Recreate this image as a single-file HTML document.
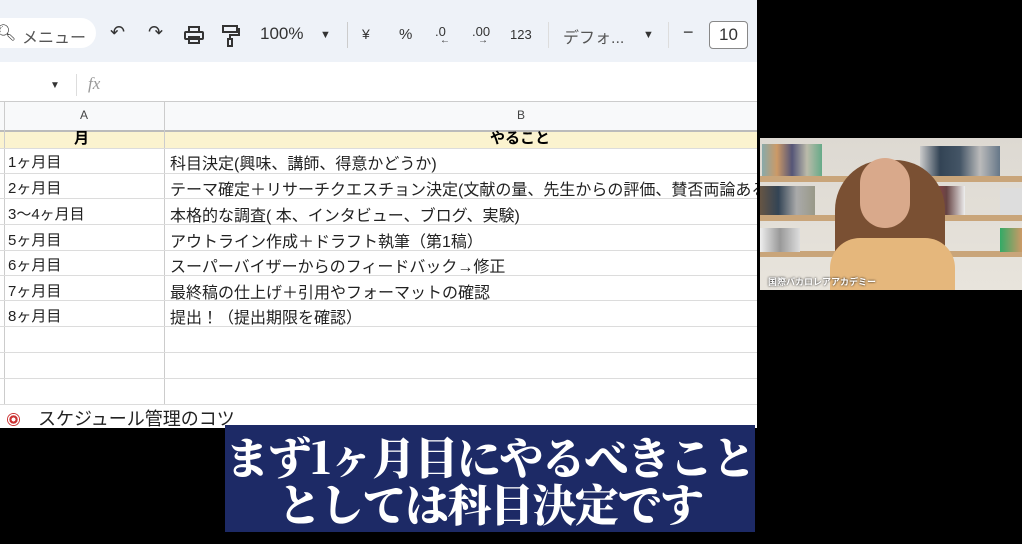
<!DOCTYPE html>
<html><head><meta charset="utf-8"><style>
*{margin:0;padding:0;box-sizing:border-box}
body{width:1022px;height:544px;background:#000;position:relative;overflow:hidden;font-family:"Liberation Sans","Noto Sans CJK JP",sans-serif}
.abs{position:absolute}
#sheet{left:0;top:0;width:757px;height:428px;background:#fff;overflow:hidden}
#tb{left:0;top:0;width:757px;height:62px;background:#eef2f8}
.t{position:absolute;top:24px;font-size:16px;color:#333}
.hl{position:absolute;left:0;width:757px;height:1px;background:#dcdcdc}
.cell{position:absolute;font-size:15px;color:#222;white-space:nowrap}
.cb{font-size:16px;top:-1px}
#cap{left:225px;top:425px;width:530px;height:107px;background:#1d2a66;color:#fff;font-family:"Noto Serif CJK SC","Liberation Serif",serif;font-weight:900;font-size:44px;line-height:47px;text-align:center;padding-top:7px;letter-spacing:-1.5px;white-space:nowrap}
#vid{left:760px;top:138px;width:262px;height:152px;background:linear-gradient(#ddd9d2,#e8e4dc);overflow:hidden}
.shelf{position:absolute;left:0;width:262px;height:6px;background:#c9a57a}
</style></head><body>
<div id="sheet" class="abs">
 <div id="tb" class="abs">
  <div class="abs" style="left:0;top:18px;width:96px;height:30px;background:#fff;border-radius:0 15px 15px 0"></div>
  <div class="t" style="left:-4px;top:23px">🔍︎</div>
  <div class="t" style="left:22px;color:#555">メニュー</div>
  <div class="t" style="left:110px;font-size:18px;top:22px">↶</div>
  <div class="t" style="left:148px;font-size:18px;top:22px">↷</div>
  <svg class="abs" style="left:184px;top:26px" width="20" height="18" viewBox="0 0 20 18" fill="none" stroke="#333" stroke-width="2"><rect x="5" y="1" width="10" height="5"/><rect x="1" y="6" width="18" height="7" rx="1"/><rect x="5" y="11" width="10" height="6"/></svg>
  <svg class="abs" style="left:222px;top:25px" width="18" height="22" viewBox="0 0 18 22" fill="none" stroke="#333" stroke-width="2"><rect x="1" y="1" width="14" height="6"/><path d="M15 4h2v6H8v4"/><rect x="6" y="14" width="4" height="7"/></svg>
  <div class="t" style="left:260px;font-size:17px">100%</div>
  <div class="t" style="left:320px;font-size:11px;top:29px">▼</div>
  <div class="abs" style="left:347px;top:22px;width:1px;height:26px;background:#ccc"></div>
  <div class="t" style="left:362px;font-size:14px;top:26px">¥</div>
  <div class="t" style="left:399px;font-size:15px;top:26px">%</div>
  <div class="t" style="left:435px;font-size:13px;top:24px">.0<br><span style="position:relative;top:-8px;left:5px;font-size:10px">←</span></div>
  <div class="t" style="left:472px;font-size:13px;top:24px">.00<br><span style="position:relative;top:-8px;left:6px;font-size:10px">→</span></div>
  <div class="t" style="left:510px;font-size:13px;top:27px">123</div>
  <div class="abs" style="left:548px;top:22px;width:1px;height:26px;background:#ddd"></div>
  <div class="t" style="left:563px;color:#555">デフォ...</div>
  <div class="t" style="left:643px;font-size:11px;top:29px">▼</div>
  <div class="abs" style="left:668px;top:22px;width:1px;height:26px;background:#ddd"></div>
  <div class="t" style="left:683px;font-size:18px;top:22px">−</div>
  <div class="abs" style="left:709px;top:21px;width:39px;height:28px;border:1px solid #888;border-radius:4px;background:#fff;font-size:17px;text-align:center;line-height:26px;color:#333">10</div>
 </div>
 <div class="abs" style="left:50px;top:80px;font-size:10px;color:#333">▼</div>
 <div class="abs" style="left:76px;top:74px;width:1px;height:22px;background:#ddd"></div>
 <div class="abs" style="left:88px;top:74px;font-size:17px;color:#999;font-style:italic;font-family:'Liberation Serif',serif">fx</div>
 <div class="abs" style="left:0;top:101px;width:757px;height:29px;background:#f8f9fa;border-top:1px solid #ccc"></div>
 <div class="abs" style="left:80px;top:108px;font-size:12px;color:#444">A</div>
 <div class="abs" style="left:517px;top:108px;font-size:12px;color:#444">B</div>
 <div class="abs" style="left:0;top:130px;width:757px;height:18px;background:#fbf3cf;border-top:2px solid #bbb"></div>
 <div class="abs" style="left:74px;top:127px;font-size:15px;font-weight:bold">月</div>
 <div class="abs" style="left:490px;top:127px;font-size:15px;font-weight:bold">やること</div>
 <div class="abs" style="left:164px;top:101px;width:1px;height:310px;background:#ccc"></div>
 <div class="abs" style="left:4px;top:101px;width:1px;height:310px;background:#ccc"></div>
 <div class="hl" style="top:148px"></div><div class="hl" style="top:173px"></div><div class="hl" style="top:198px"></div><div class="hl" style="top:224px"></div><div class="hl" style="top:250px"></div><div class="hl" style="top:275px"></div><div class="hl" style="top:300px"></div><div class="hl" style="top:326px"></div><div class="hl" style="top:352px"></div><div class="hl" style="top:378px"></div><div class="hl" style="top:404px"></div>
 <div class="cell" style="left:8px;top:151px">1ヶ月目</div><div class="cell" style="left:170px;top:150px;font-size:16px">科目決定(興味、講師、得意かどうか)</div>
 <div class="cell" style="left:8px;top:177px">2ヶ月目</div><div class="cell" style="left:170px;top:176px;font-size:16px">テーマ確定＋リサーチクエスチョン決定(文献の量、先生からの評価、賛否両論あるか)</div>
 <div class="cell" style="left:8px;top:203px">3〜4ヶ月目</div><div class="cell" style="left:170px;top:202px;font-size:16px">本格的な調査( 本、インタビュー、ブログ、実験)</div>
 <div class="cell" style="left:8px;top:229px">5ヶ月目</div><div class="cell" style="left:170px;top:228px;font-size:16px">アウトライン作成＋ドラフト執筆（第1稿）</div>
 <div class="cell" style="left:8px;top:254px">6ヶ月目</div><div class="cell" style="left:170px;top:253px;font-size:16px">スーパーバイザーからのフィードバック→修正</div>
 <div class="cell" style="left:8px;top:280px">7ヶ月目</div><div class="cell" style="left:170px;top:279px;font-size:16px">最終稿の仕上げ＋引用やフォーマットの確認</div>
 <div class="cell" style="left:8px;top:305px">8ヶ月目</div><div class="cell" style="left:170px;top:304px;font-size:16px">提出！（提出期限を確認）</div>
 <div class="abs" style="left:0;top:405px;width:757px;height:23px;background:#fff"></div>
 <div class="abs" style="left:7px;top:413px;width:13px;height:13px;border-radius:50%;background:radial-gradient(#fff 20%,#c33 22%,#c33 45%,#fff 47%,#fff 60%,#c33 62%)"></div>
 <div class="abs" style="left:38px;top:405px;font-size:18px;color:#222">スケジュール管理のコツ</div>
</div>
<div id="vid" class="abs">
 <div class="shelf" style="top:38px"></div><div class="shelf" style="top:77px"></div><div class="shelf" style="top:113px"></div>
 <div class="abs" style="left:2px;top:6px;width:60px;height:32px;background:linear-gradient(90deg,#8aa,#c96,#557,#bba,#6a8)"></div>
 <div class="abs" style="left:160px;top:8px;width:80px;height:30px;background:linear-gradient(90deg,#ccc,#345,#456,#bbb,#678)"></div>
 <div class="abs" style="left:150px;top:48px;width:55px;height:29px;background:linear-gradient(90deg,#833,#a44,#644,#eee)"></div>
 <div class="abs" style="left:0;top:48px;width:55px;height:29px;background:linear-gradient(90deg,#654,#345,#aaa,#998)"></div>
 <div class="abs" style="left:240px;top:50px;width:22px;height:27px;background:#ddd"></div>
 <div class="abs" style="left:240px;top:90px;width:22px;height:24px;background:linear-gradient(90deg,#3a6,#c96)"></div>
 <div class="abs" style="left:0;top:90px;width:40px;height:24px;background:linear-gradient(90deg,#eee,#999,#ddd)"></div>
 <div class="abs" style="left:75px;top:22px;width:110px;height:130px;border-radius:50px 50px 10px 10px;background:#7a5033"></div>
 <div class="abs" style="left:100px;top:20px;width:50px;height:70px;border-radius:25px;background:#d9a98b"></div>
 <div class="abs" style="left:70px;top:100px;width:125px;height:52px;border-radius:30px 30px 0 0;background:#e5b77c"></div>
 <div class="abs" style="left:8px;top:137px;font-size:9px;color:#fff;font-weight:bold;text-shadow:0 0 2px #000">国際バカロレアアカデミー</div>
</div>
<div id="cap" class="abs">まず1ヶ月目にやるべきこと<br>としては科目決定です</div>
</body></html>
